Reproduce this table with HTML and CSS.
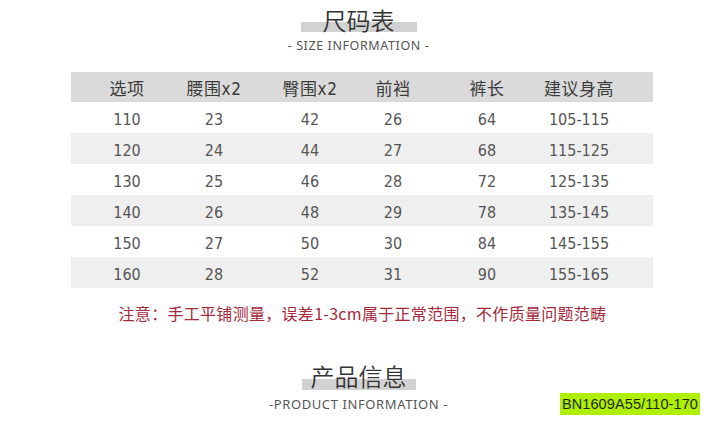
FILE: index.html
```html
<!DOCTYPE html>
<html lang="zh-CN">
<head>
<meta charset="utf-8">
<title>尺码表</title>
<link rel="stylesheet" href="styles.css">
</head>
<body>
<div class="page">
  <section class="section">
    <h2 class="title">尺码表</h2>
    <p class="subtitle">- SIZE INFORMATION -</p>
  </section>

  <div class="table">
    <div class="row head">
      <div class="cell"><span>选项</span></div>
      <div class="cell"><span>腰围x2</span></div>
      <div class="cell"><span>臀围x2</span></div>
      <div class="cell"><span>前裆</span></div>
      <div class="cell"><span>裤长</span></div>
      <div class="cell"><span>建议身高</span></div>
    </div>
    <div class="row">
      <div class="cell"><span>110</span></div><div class="cell"><span>23</span></div><div class="cell"><span>42</span></div><div class="cell"><span>26</span></div><div class="cell"><span>64</span></div><div class="cell"><span>105-115</span></div>
    </div>
    <div class="row alt">
      <div class="cell"><span>120</span></div><div class="cell"><span>24</span></div><div class="cell"><span>44</span></div><div class="cell"><span>27</span></div><div class="cell"><span>68</span></div><div class="cell"><span>115-125</span></div>
    </div>
    <div class="row">
      <div class="cell"><span>130</span></div><div class="cell"><span>25</span></div><div class="cell"><span>46</span></div><div class="cell"><span>28</span></div><div class="cell"><span>72</span></div><div class="cell"><span>125-135</span></div>
    </div>
    <div class="row alt">
      <div class="cell"><span>140</span></div><div class="cell"><span>26</span></div><div class="cell"><span>48</span></div><div class="cell"><span>29</span></div><div class="cell"><span>78</span></div><div class="cell"><span>135-145</span></div>
    </div>
    <div class="row">
      <div class="cell"><span>150</span></div><div class="cell"><span>27</span></div><div class="cell"><span>50</span></div><div class="cell"><span>30</span></div><div class="cell"><span>84</span></div><div class="cell"><span>145-155</span></div>
    </div>
    <div class="row alt">
      <div class="cell"><span>160</span></div><div class="cell"><span>28</span></div><div class="cell"><span>52</span></div><div class="cell"><span>31</span></div><div class="cell"><span>90</span></div><div class="cell"><span>155-165</span></div>
    </div>
  </div>

  <p class="note">注意：手工平铺测量，误差1-3cm属于正常范围，不作质量问题范畴</p>

  <section class="section second">
    <h2 class="title">产品信息</h2>
    <p class="subtitle">-PRODUCT INFORMATION -</p>
    <span class="tag">BN1609A55/110-170</span>
  </section>
</div>
</body>
</html>
```

FILE: styles.css
```css
* { box-sizing: border-box; }
html, body {
  margin: 0;
  padding: 0;
  background: #ffffff;
}
body {
  width: 715px;
  height: 432px;
  overflow: hidden;
  font-family: "Noto Sans CJK SC", "Noto Sans", sans-serif;
  color: #444;
}
.page {
  position: relative;
  width: 715px;
  height: 432px;
  display: flex;
  flex-direction: column;
}
.section {
  display: flex;
  flex-direction: column;
  align-items: center;
  padding-left: 2px;
}
.title {
  margin: 6px 0 0;
  padding: 0 22px;
  font-size: 24px;
  line-height: 28px;
  font-weight: 350;
  color: #333;
  letter-spacing: 0;
  background: linear-gradient(to bottom,
    transparent 0, transparent 16px,
    #d2d2d2 16px, #d2d2d2 26px,
    transparent 26px);
}
.subtitle {
  margin: 4px 0 0;
  font-family: "Noto Sans", "Liberation Sans", sans-serif;
  font-size: 12.5px;
  line-height: 16px;
  letter-spacing: 0.6px;
  color: #555;
}
.table {
  margin: 18px 0 0 71px;
  width: 582px;
  display: flex;
  flex-direction: column;
}
.row {
  display: grid;
  grid-template-columns: 112px 62px 130px 36px 152px 32px 58px;
  height: 31px;
  padding-top: 3px;
  align-items: center;
  font-family: "DejaVu Sans", "Noto Sans CJK SC", sans-serif;
  font-stretch: condensed;
  font-size: 16px;
  color: #555;
}
.row.head {
  height: 30px;
  padding-top: 0;
  background: #dadada;
  font-size: 17px;
  color: #3c3c3c;
}
.row.head .cell span {
  letter-spacing: 0.5px;
}
.row.alt {
  background: #efefef;
}
.cell {
  min-width: 0;
  display: flex;
  justify-content: center;
  white-space: nowrap;
}
.cell span { display: block; }
.note {
  margin: 14px 0 0;
  text-align: center;
  padding-left: 10px;
  font-size: 16px;
  line-height: 22px;
  color: #a52a3a;
  letter-spacing: 0.3px;
}
.second {
  margin-top: 38px;
}
.second .title {
  margin-top: 0;
  padding: 0 9px;
  background: linear-gradient(to bottom,
    transparent 0, transparent 17px,
    #d2d2d2 17px, #d2d2d2 28px,
    transparent 28px);
}
.second .subtitle {
  margin-top: 6px;
  font-size: 13px;
}
.tag {
  position: absolute;
  left: 560px;
  top: 393px;
  width: 140px;
  height: 22px;
  background: #aef000;
  color: #1f2a16;
  font-family: "Liberation Sans", "Noto Sans", sans-serif;
  font-size: 14.5px;
  line-height: 22px;
  text-align: center;
  letter-spacing: 0.1px;
}
```
